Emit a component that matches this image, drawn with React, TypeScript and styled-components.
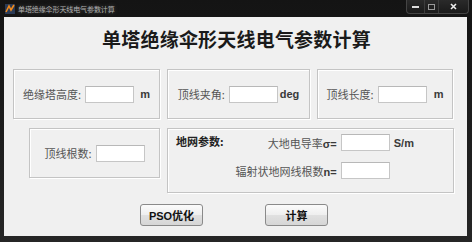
import React from 'react';
import styled, { createGlobalStyle } from 'styled-components';

const GlobalStyle = createGlobalStyle`
  html, body { margin: 0; padding: 0; }
  body {
    width: 472px;
    height: 242px;
    overflow: hidden;
    font-family: "Liberation Sans", "Noto Sans CJK SC", sans-serif;
  }
`;

const Frame = styled.div`
  width: 472px;
  height: 242px;
  box-sizing: border-box;
  background: linear-gradient(180deg, #141414 0%, #1e1e1e 60%, #262626 100%);
  padding: 0 5px 6px 4px;
  display: flex;
  flex-direction: column;
`;

const TitleBar = styled.div`
  height: 17px;
  display: flex;
  align-items: flex-start;
  justify-content: space-between;
`;

const TitleLeft = styled.div`
  display: flex;
  align-items: center;
  gap: 3px;
  height: 17px;
  padding-left: 1px;
`;

const TitleText = styled.span`
  font-family: "Noto Sans CJK SC", sans-serif;
  font-size: 7px;
  color: #b0b0b0;
  letter-spacing: -0.1px;
  text-shadow: 0 0 4px #555;
`;

const Controls = styled.div`
  display: flex;
  height: 13px;
  margin-right: -2px;
  border: 1px solid #444;
  border-top: none;
  border-radius: 0 0 4px 4px;
  background: linear-gradient(180deg, #2a2a2a, #1a1a1a);
  overflow: hidden;
`;

const CtrlButton = styled.div<{ $w: number }>`
  width: ${p => p.$w}px;
  height: 13px;
  display: flex;
  align-items: center;
  justify-content: center;
  & + & { border-left: 1px solid #3c3c3c; }
`;

const Client = styled.div`
  flex: 1;
  background: #f0f0f0;
  display: flex;
  flex-direction: column;
  align-items: stretch;
`;

const Heading = styled.h1`
  margin: 12px 0 0 2px;
  height: 20px;
  text-align: center;
  font-family: "Noto Sans CJK SC", serif;
  font-weight: 700;
  font-size: 19px;
  line-height: 20px;
  color: #1a1a1a;
  letter-spacing: 0.2px;
`;

const Row = styled.div<{ $top: number; $left: number }>`
  display: flex;
  align-items: flex-start;
  gap: 7px;
  margin-top: ${p => p.$top}px;
  padding-left: ${p => p.$left}px;
`;

const Panel = styled.div<{ $w: number; $h: number }>`
  width: ${p => p.$w}px;
  height: ${p => p.$h}px;
  box-sizing: border-box;
  border: 1px solid #c4c4c4;
  box-shadow: inset 1px 1px 0 #fff, 1px 1px 0 #fff;
  display: flex;
  align-items: center;
  justify-content: center;
  gap: 4px;
  font-size: 11px;
  color: #555;
`;

const GroundPanel = styled(Panel)`
  align-items: flex-start;
  justify-content: flex-start;
  padding: 5px 0 0 8px;
  gap: 12px;
`;

const Label = styled.span`
  font-family: "Noto Sans CJK SC", sans-serif;
  font-size: 11px;
  color: #555;
  white-space: nowrap;
`;

const GroupTitle = styled.span`
  font-family: "Noto Sans CJK SC", sans-serif;
  font-size: 11px;
  font-weight: 700;
  color: #222;
  white-space: nowrap;
  line-height: 14px;
`;

const Unit = styled.span<{ $gap: number }>`
  font-family: "Liberation Sans", sans-serif;
  font-weight: 700;
  font-size: 11px;
  color: #3a3a3a;
  margin-left: ${p => p.$gap}px;
`;

const Field = styled.input`
  width: 49px;
  height: 17px;
  box-sizing: border-box;
  border: 1px solid #c6c6c6;
  border-top-color: #b8b8b8;
  background: #fff;
  padding: 0;
  margin: 0;
  outline: none;
`;

const ParamGrid = styled.div`
  display: grid;
  grid-template-columns: auto 49px auto;
  column-gap: 4px;
  row-gap: 11px;
  align-items: center;
  justify-items: end;
`;

const Sym = styled.span`
  font-family: "Liberation Sans", sans-serif;
  font-weight: 700;
  color: #3a3a3a;
`;

const ButtonRow = styled.div`
  display: flex;
  gap: 62px;
  margin-top: 11px;
  padding-left: 136px;
`;

const Button = styled.button`
  width: 63px;
  height: 22px;
  box-sizing: border-box;
  border: 1px solid #8a8a8a;
  border-radius: 3px;
  background: linear-gradient(180deg, #fbfbfb 0%, #efefef 48%, #e0e0e0 52%, #d6d6d6 100%);
  font-family: "Liberation Sans", "Noto Sans CJK SC", sans-serif;
  font-weight: 700;
  font-size: 11px;
  color: #111;
  padding: 0;
`;

const AppIcon = () => (
  <svg width="10" height="10" viewBox="0 0 10 10">
    <rect x="0" y="0" width="10" height="10" fill="#2a3a55" />
    <path d="M1 8 L4 2 L6 6 L9 1" stroke="#f08a1c" strokeWidth="1.6" fill="none" />
  </svg>
);

export default function App() {
  return (
    <>
      <GlobalStyle />
      <Frame>
        <TitleBar>
          <TitleLeft>
            <AppIcon />
            <TitleText>单塔绝缘伞形天线电气参数计算</TitleText>
          </TitleLeft>
          <Controls>
            <CtrlButton $w={17}>
              <svg width="7" height="3"><rect width="7" height="2" y="1" fill="#ddd" /></svg>
            </CtrlButton>
            <CtrlButton $w={13}>
              <svg width="7" height="6"><rect x="0.5" y="0.5" width="6" height="5" fill="none" stroke="#999" /></svg>
            </CtrlButton>
            <CtrlButton $w={29}>
              <svg width="7" height="7" viewBox="0 0 7 7">
                <path d="M1 1 L6 6 M6 1 L1 6" stroke="#eee" strokeWidth="1.6" />
              </svg>
            </CtrlButton>
          </Controls>
        </TitleBar>
        <Client>
          <Heading>单塔绝缘伞形天线电气参数计算</Heading>
          <Row $top={20} $left={9}>
            <Panel $w={147} $h={50}>
              <Label>绝缘塔高度:</Label>
              <Field />
              <Unit $gap={2}>m</Unit>
            </Panel>
            <Panel $w={143} $h={50}>
              <Label>顶线夹角:</Label>
              <Field />
              <Unit $gap={-2}>deg</Unit>
            </Panel>
            <Panel $w={136} $h={50}>
              <Label>顶线长度:</Label>
              <Field />
              <Unit $gap={3}>m</Unit>
            </Panel>
          </Row>
          <Row $top={9} $left={25}>
            <Panel $w={131} $h={50}>
              <Label>顶线根数:</Label>
              <Field />
            </Panel>
            <GroundPanel $w={287} $h={65}>
              <GroupTitle>地网参数:</GroupTitle>
              <ParamGrid>
                <Label>大地电导率<Sym>σ=</Sym></Label>
                <Field />
                <Unit $gap={0}>S/m</Unit>
                <Label>辐射状地网线根数<Sym>n=</Sym></Label>
                <Field />
                <span />
              </ParamGrid>
            </GroundPanel>
          </Row>
          <ButtonRow>
            <Button>PSO优化</Button>
            <Button>计算</Button>
          </ButtonRow>
        </Client>
      </Frame>
    </>
  );
}
